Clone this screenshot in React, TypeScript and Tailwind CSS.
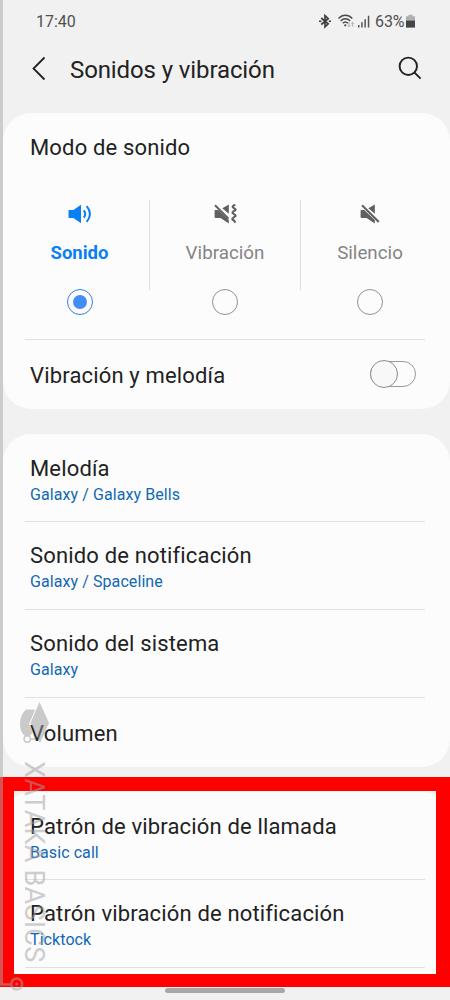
import React from 'react'
import clsx from 'clsx'

const StatusIcons: React.FC = () => (
  <div className="flex items-center">
    {/* Bluetooth */}
    <svg className="mr-[7px]" width="12" height="15" viewBox="0 0 12 15" fill="none" stroke="#3f3f3f" strokeWidth="1.7">
      <path d="M2.2 4L9.2 9.9L6 12.9V1.6L9.2 4.6L2.2 10.5" />
      <path d="M0 7.25h2.4M9.8 7.25H12" />
    </svg>
    {/* Wifi */}
    <svg className="mr-[2px]" width="18" height="15" viewBox="0 0 18 15" fill="none" stroke="#4a4a4a" strokeWidth="1.4">
      <path d="M0.5 4.4C4.5 0.2 10.3 0.2 14.3 4.4" />
      <path d="M2.6 6.9C5.5 4 9.3 4 12.2 6.9" />
      <path d="M4.7 9.3C6.5 7.5 8.3 7.5 10.1 9.3" />
      <circle cx="7.3" cy="11.3" r="1.1" fill="#4a4a4a" stroke="none" />
      <path d="M11 8.5v4.2M9.6 11.3l1.4 1.4l1.4-1.4M14.6 12.7V8.5M13.2 9.9l1.4-1.4l1.4 1.4" stroke="#b0b0b0" strokeWidth="1" />
    </svg>
    {/* Signal */}
    <svg className="mr-[5px]" width="12" height="15" viewBox="0 0 12 15" fill="#555">
      <path d="M0 11h1.5v2.5H0zM3.2 8.3h1.5v5.2H3.2zM6.4 5.2h1.5v8.3H6.4zM9.8 1.7h1.5v11.8H9.8z" />
    </svg>
    <span className="mt-[2px] w-[31px] text-[16px] leading-5 tracking-[-0.1px] text-[#505050]">63%</span>
    {/* Battery */}
    <svg width="9" height="15" viewBox="0 0 9 15">
      <path d="M2.5 .8h4v1.5H9V7H0V2.3h2.5z" fill="#b0b0b0" />
      <path d="M0 6.6h9v7H0z" fill="#454545" />
    </svg>
  </div>
)

const SoundIcon: React.FC = () => (
  <svg width="24" height="20" viewBox="0 0 24 20" fill="none">
    <path d="M.5 6.7Q.5 6 1.2 6H5.4L13 .8v18.4L5.4 14H1.2Q.5 14 .5 13.3z" fill="#0a80f5" />
    <path d="M15.7 6.3Q18.8 10 15.7 13.7" stroke="#0a80f5" strokeWidth="2" />
    <path d="M18.7 2.2Q25.2 10 18.7 17.8" stroke="#0a80f5" strokeWidth="2" />
  </svg>
)

const MutedIcon: React.FC<{ vibrate?: boolean }> = ({ vibrate }) => (
  <svg
    className={clsx(vibrate && 'ml-[2px]')}
    width={vibrate ? 24 : 20}
    height="20"
    viewBox={vibrate ? '0 0 24 20' : '0 0 20 20'}
    fill="none"
  >
    <path d="M1.4 6H4.2L14.8 16.1V19.4L6.6 14H1.6Q.6 14 .6 13V6.8Q.6 6 1.4 6z" fill="#606060" />
    <path d="M14.8.4V9.8L8.4 4.3z" fill="#606060" />
    {vibrate ? (
      <>
        <path d="M1 1.2L14.5 14.6" stroke="#606060" strokeWidth="2" />
        <path
          d="M21.4 .8C18 2 18 3 20 4.2C22.5 5.6 22 6 19.8 7.2C17.8 8.4 18 9 20 10.2C22.4 11.6 22 12.2 19.8 13.3C17.6 14.6 18 15.4 20 16.5L21.4 18.6"
          stroke="#606060"
          strokeWidth="2.1"
        />
      </>
    ) : (
      <path d="M2 1.3L18.8 18" stroke="#606060" strokeWidth="2" />
    )}
  </svg>
)

const modes = [
  { label: 'Sonido', icon: <SoundIcon />, active: true },
  { label: 'Vibración', icon: <MutedIcon vibrate />, active: false },
  { label: 'Silencio', icon: <MutedIcon />, active: false },
]

const Radio: React.FC<{ active: boolean }> = ({ active }) => (
  <span
    className={clsx(
      'flex h-[26px] w-[26px] items-center justify-center rounded-full border',
      active ? 'border-[#387fd8]' : 'border-[#929292]'
    )}
  >
    {active && <span className="h-[14px] w-[14px] rounded-full bg-[#438df7]" />}
  </span>
)

const Row: React.FC<{ title: string; value: string }> = ({ title, value }) => (
  <div className="ml-[22px] mr-[25px] h-[87.6px] border-b border-[#e0e0e0] pl-[5px] pt-[20px]">
    <p className="whitespace-nowrap text-[22px] leading-7 tracking-[0.16px] text-[#222]">{title}</p>
    <p className="text-[16px] leading-6 tracking-[0.08px] text-[#1268b3]">{value}</p>
  </div>
)

const Watermark: React.FC = () => (
  <div className="pointer-events-none absolute inset-0 text-[#a0a0a0] opacity-50">
    <div className="absolute left-0 top-0 h-[985px] w-[3px] bg-[#a7a7a7]" />
    <svg className="absolute left-[18px] top-[700px]" width="34" height="46" viewBox="0 0 34 46" fill="#999">
      <path d="M15 9.5H8Q2 15 2 24Q2 32 7 36H12L15 32L11 24L17 10z" />
      <path d="M21.5 2L31 23L22 43L12.5 23z" />
      <circle cx="9.3" cy="39" r="3.2" fill="none" stroke="#999" strokeWidth="1.5" />
      <path d="M12.5 39H18" stroke="#999" strokeWidth="1.5" />
    </svg>
    <div className="absolute left-[20px] top-[761px] text-[27px] leading-[28px] tracking-[0.25px] [writing-mode:vertical-rl]">
      <span className="block whitespace-nowrap">XATAKA BASICS</span>
    </div>
    <svg className="absolute left-0 top-[976px]" width="26" height="20" viewBox="0 0 26 20" fill="none" stroke="#a7a7a7" strokeWidth="2.5">
      <path d="M0 8.5h11" />
      <circle cx="16.7" cy="8" r="5.5" />
      <circle cx="16.7" cy="8" r="1.5" fill="#aaa" stroke="none" />
    </svg>
  </div>
)

const App: React.FC = () => (
  <div className="relative h-[1000px] w-[450px] overflow-hidden bg-[#f1f1f1] font-['Roboto',sans-serif]">
    {/* Status bar */}
    <div className="flex h-[42px] items-center justify-between pl-[36px] pr-[35px]">
      <span className="mt-[2px] text-[16px] leading-5 text-[#505050]">17:40</span>
      <StatusIcons />
    </div>

    {/* Header */}
    <header className="flex h-[71px] items-start pl-[32px] pr-[28px] pt-[13px]">
      <svg className="mt-px" width="14" height="25" viewBox="0 0 14 25" fill="none" stroke="#222" strokeWidth="1.8">
        <path d="M12.5 1.5L1.5 12.5L12.5 23.5" />
      </svg>
      <h1 className="ml-[24px] flex-1 text-[24px] leading-[30px] tracking-[-0.11px] text-[#222]">Sonidos y vibración</h1>
      <svg className="mt-px" width="24" height="25" viewBox="0 0 24 25" fill="none" stroke="#222" strokeWidth="1.9">
        <circle cx="10.3" cy="10.3" r="8.7" />
        <path d="M16.3 16.3L22.6 22.6" />
      </svg>
    </header>

    <main className="ml-[3px]">
      <section className="h-[296px] rounded-[28px] bg-[#fcfcfc]">
        <h2 className="pl-[27px] pt-[21px] text-[22px] leading-7 tracking-[0.16px] text-[#222]">Modo de sonido</h2>
        <div className="mx-[7px] mt-[38px] flex h-[90px]">
          {modes.map(({ label, icon, active }, i) => (
            <div
              key={label}
              className={clsx(
                'flex flex-col items-center',
                i === 0 && 'w-[139px]',
                i === 1 && 'w-[152px] border-x border-[#dedede]',
                i === 2 && '-ml-px w-[140px]'
              )}
            >
              <div className="mt-[4px] h-5">{icon}</div>
              <span
                className={clsx(
                  'mt-[17px] leading-6',
                  active ? 'text-[18.5px] font-bold text-[#0a7ff2]' : 'text-[18.8px] text-[#848484]'
                )}
              >
                {label}
              </span>
              <div className="mt-[24px]"><Radio active={active} /></div>
            </div>
          ))}
        </div>
        <div className="ml-[22px] mr-[25px] mt-[49px] flex h-[70px] items-center justify-between border-t border-[#e0e0e0] pl-[5px] pr-[9px]">
          <span className="mt-[2px] text-[22px] leading-7 tracking-[0.16px] text-[#222]">Vibración y melodía</span>
          <span className="-mt-[2px] flex h-[26px] w-[46px] items-center rounded-full border border-[#999]">
            <span className="-ml-px h-7 w-7 shrink-0 rounded-full border border-[#8c8c8c] bg-[#f8f8f8]" />
          </span>
        </div>
      </section>

      <section className="mt-[25px] h-[333px] rounded-[28px] bg-[#fcfcfc] pt-[0.8px]">
        <Row title="Melodía" value="Galaxy / Galaxy Bells" />
        <Row title="Sonido de notificación" value="Galaxy / Spaceline" />
        <Row title="Sonido del sistema" value="Galaxy" />
        <p className="pl-[27px] pt-[22px] text-[22px] leading-7 tracking-[0.16px] text-[#222]">Volumen</p>
      </section>
    </main>

    {/* Highlighted vibration patterns */}
    <div className="mt-[9.5px] h-[210.5px] overflow-hidden border-x-[14px] border-b-[13px] border-t-[14px] border-[#fe0000] bg-[#f1f1f1]">
      <section className="-ml-[11px] -mr-[14px] mt-[1px] h-[220px] rounded-t-[28px] bg-[#fcfcfc] pt-[1px]">
        <Row title="Patrón de vibración de llamada" value="Basic call" />
        <Row title="Patrón vibración de notificación" value="Ticktock" />
      </section>
    </div>

    <div className="mx-auto mt-[1px] h-[5px] w-[120px] rounded-full bg-[#a8a8a8]" />
    <Watermark />
  </div>
)

export default App
